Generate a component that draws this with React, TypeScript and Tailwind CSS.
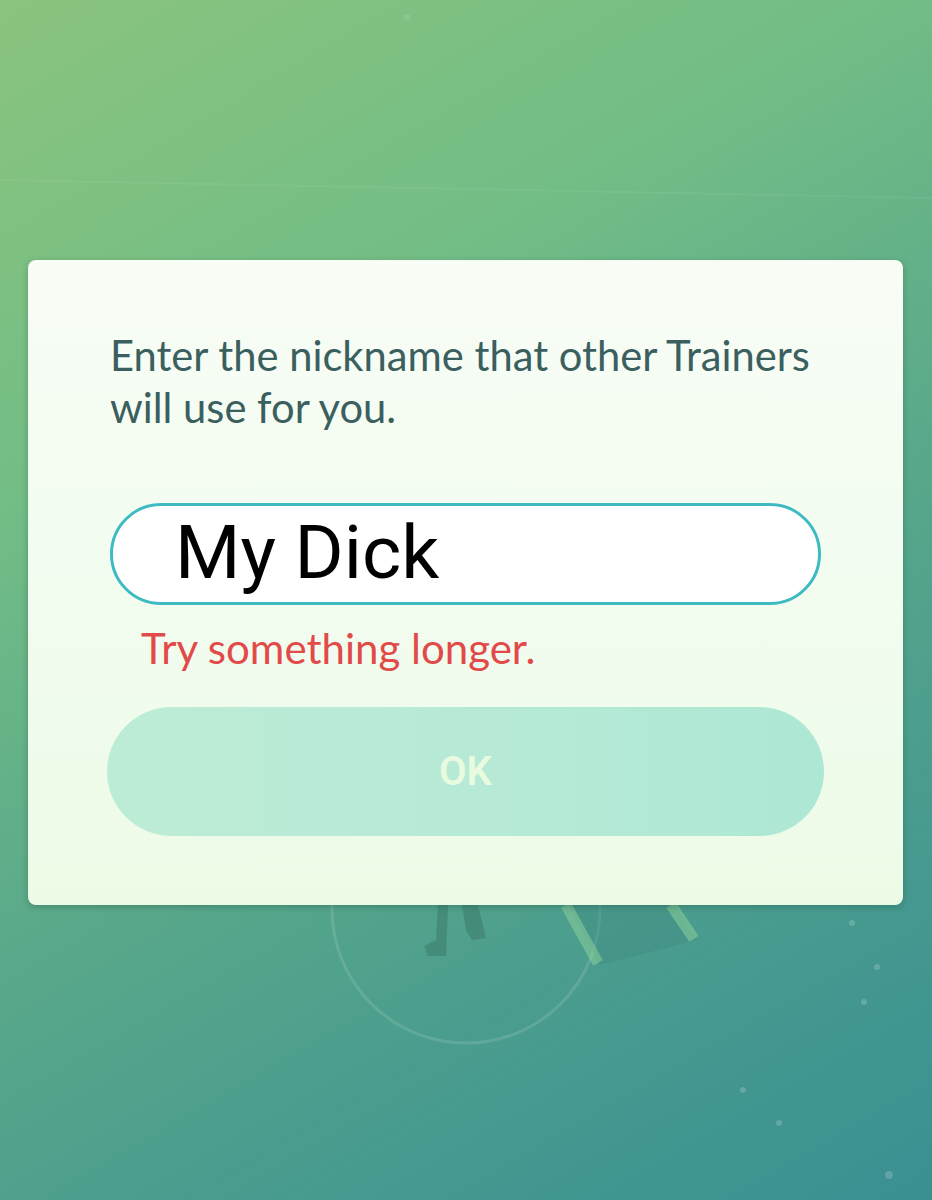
export default function App() {
  return (
    <div className="relative w-[932px] h-[1200px] overflow-hidden bg-[linear-gradient(150deg,#8ac47e_0%,#72bd86_30%,#5aa98a_55%,#469a8f_80%,#3b8f92_100%)] font-['Lato',sans-serif]">
      {/* faint map decoration */}
      <svg className="absolute left-0 top-0" width="932" height="1200" viewBox="0 0 932 1200">
        <circle cx="466" cy="909" r="134" fill="none" stroke="#ffffff" strokeOpacity="0.12" strokeWidth="3" />
        <path d="M0 180 L932 198" stroke="#ffffff" strokeOpacity="0.06" strokeWidth="2" />
        <path d="M568 905 L600 965 L697 940 L675 905 Z" fill="#3f8a82" fillOpacity="0.4" />
        <path d="M566 905 L598 963" stroke="#8ccf9a" strokeOpacity="0.55" strokeWidth="11" />
        <path d="M671 905 L694 939" stroke="#8ccf9a" strokeOpacity="0.55" strokeWidth="11" />
        <path d="M438 905 L436 940 L424 946 L428 956 L446 956 L448 905 Z" fill="#3e7f6c" fillOpacity="0.6" />
        <path d="M462 905 L466 930 L472 940 L486 938 L478 905 Z" fill="#3e7f6c" fillOpacity="0.6" />
        <circle cx="852" cy="923" r="3" fill="#ffffff" fillOpacity="0.18" />
        <circle cx="877" cy="967" r="3" fill="#ffffff" fillOpacity="0.18" />
        <circle cx="864" cy="1002" r="3" fill="#ffffff" fillOpacity="0.18" />
        <circle cx="743" cy="1090" r="3" fill="#ffffff" fillOpacity="0.18" />
        <circle cx="779" cy="1123" r="3" fill="#ffffff" fillOpacity="0.18" />
        <circle cx="889" cy="1175" r="4" fill="#ffffff" fillOpacity="0.18" />
        <circle cx="407" cy="17" r="3" fill="#ffffff" fillOpacity="0.12" />
      </svg>

      <div className="relative flex pt-[260px] pl-[28px]">
        <div className="w-[875px] h-[645px] rounded-[8px] bg-[linear-gradient(180deg,#f8fdf6_0%,#f1fcee_60%,#ecfbe6_100%)] shadow-[0_2px_6px_rgba(30,80,60,0.35)] flex flex-col px-[82px]">
          <p className="mt-[69px] text-[41.7px] leading-[52px] text-[#3b5f5f] whitespace-nowrap">
            Enter the nickname that other Trainers
            <br />
            will use for you.
          </p>

          <div className="mt-[70px] w-[711px] h-[102px] rounded-full border-[3px] border-[#3dbac2] bg-white flex items-center pl-[62px]">
            <span className="font-['Roboto',sans-serif] text-[75px] leading-none text-black pb-[4px]">My Dick</span>
          </div>

          <p className="mt-[17px] pl-[31px] text-[42px] leading-[52px] text-[#e24a49]">Try something longer.</p>

          <div className="mt-[33px] -ml-[3px] w-[717px] h-[129px] rounded-full bg-[linear-gradient(90deg,#bdecd6_0%,#b7ead6_50%,#ade8d5_100%)] flex items-center justify-center">
            <span className="font-['Roboto',sans-serif] font-semibold text-[40px] text-[#e8fbdf]">OK</span>
          </div>
        </div>
      </div>
    </div>
  );
}
